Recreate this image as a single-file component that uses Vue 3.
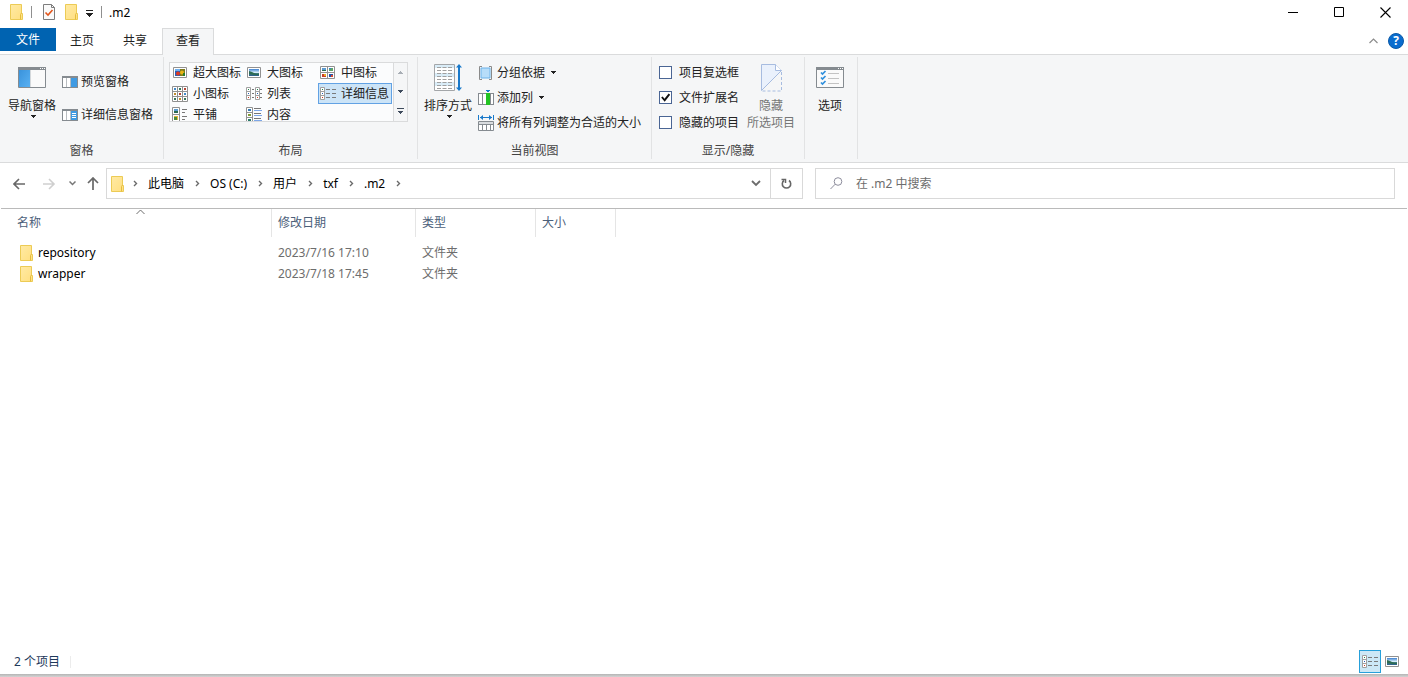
<script setup>
import { ref, reactive } from 'vue'

const tabs = ['主页', '共享', '查看']
const activeTab = ref('查看')

const layouts = [
  { name: '超大图标', icon: 'xlarge' },
  { name: '大图标', icon: 'large' },
  { name: '中图标', icon: 'medium' },
  { name: '小图标', icon: 'small' },
  { name: '列表', icon: 'list' },
  { name: '详细信息', icon: 'details' },
  { name: '平铺', icon: 'tiles' },
  { name: '内容', icon: 'content' },
]
const layout = ref('详细信息')

const toggles = reactive([
  { id: 'opt-boxes', name: '项目复选框', on: false },
  { id: 'opt-ext', name: '文件扩展名', on: true },
  { id: 'opt-hidden', name: '隐藏的项目', on: false },
])

const crumbs = ['此电脑', 'OS (C:)', '用户', 'txf', '.m2']
const files = [
  { name: 'repository', date: '2023/7/16 17:10', type: '文件夹' },
  { name: 'wrapper', date: '2023/7/18 17:45', type: '文件夹' },
]
const query = ref('')
</script>

<template>
  <svg class="sprite" aria-hidden="true">
    <defs>
      <linearGradient id="fold" x1="0" y1="0" x2="1" y2="1">
        <stop offset="0" stop-color="#ffeaa4" />
        <stop offset="1" stop-color="#ffdf80" />
      </linearGradient>
      <linearGradient id="sky" x1="0" y1="0" x2="0" y2="1">
        <stop offset="0" stop-color="#3c7fd0" />
        <stop offset="0.5" stop-color="#d6ecf8" />
        <stop offset="0.6" stop-color="#3e7c78" />
        <stop offset="1" stop-color="#2c5f8e" />
      </linearGradient>
      <linearGradient id="blue" x1="0" y1="0" x2="1" y2="1">
        <stop offset="0" stop-color="#3a93dc" />
        <stop offset="1" stop-color="#58b0f2" />
      </linearGradient>
    </defs>
    <symbol id="folder" viewBox="0 0 14 16">
      <path d="M.5.5h11v9h1v6H.5z" fill="url(#fold)" stroke="#eccb55" />
      <path d="M10.500 15.500v-5l1-1.500" fill="none" stroke="#e5bd3c" />
    </symbol>
    <symbol id="chev" viewBox="0 0 5 7">
      <path d="M1 1l2.500 2.500L1 6" fill="none" stroke="#6a6a6a" stroke-width="1.400" />
    </symbol>
    <symbol id="tri" viewBox="0 0 5 3"><path d="M0 0h5v1H4v1H3v1H2V2H1V1H0z" fill="currentColor" /></symbol>
    <symbol id="photo" viewBox="0 0 14 11">
      <path d="M.5.5h13v10H.5z" fill="#fff" stroke="#919191" />
      <path d="M2 2h10v7H2z" fill="url(#sky)" />
      <path d="M2 4l3 1 4 2h3v1H8L2 7z" fill="#2d6b52" />
    </symbol>
    <symbol id="xlarge" viewBox="0 0 16 16">
      <path d="M1.500 2.500h13v10h-13z" fill="#fff" stroke="#919191" />
      <path d="M3 4h10v7H3z" fill="#2b5fb8" />
      <path d="M3 4h5v2H3z" fill="#6eb0ef" />
      <path d="M8 4h5v7H8z" fill="#7c7a1c" />
      <circle cx="6" cy="8.500" r="2" fill="#e03a22" />
      <circle cx="10" cy="7.500" r="2" fill="#e8b414" />
      <path d="M11 8h2v3h-2z" fill="#2a7b2d" />
    </symbol>
    <symbol id="large" viewBox="0 0 16 16"><use href="#photo" x="1" y="2" width="14" height="11" /></symbol>
    <symbol id="medium" viewBox="0 0 16 16">
      <path d="M.5 1.500h14v12H.5zM7.500 1.500v12M.5 7.500h14" fill="#fff" stroke="#919191" />
      <path d="M2 3h4v3H2z" fill="#5c9bd0" /><path d="M2 5h4v1H2z" fill="#2d6b52" />
      <path d="M9 3h4v3H9z" fill="#5ca46a" /><path d="M9 3h2v1H9z" fill="#367bd0" />
      <path d="M2 9h4v3H2z" fill="#c93c2a" /><path d="M4 9h2v2H4z" fill="#e9ae23" />
      <path d="M9 9h4v3H9z" fill="#2653a8" /><path d="M11 10h2v2h-2z" fill="#d84a31" />
    </symbol>
    <symbol id="small" viewBox="0 0 16 16">
      <path d="M.5.5h15v15H.5zM5.500.5v15M10.500.5v15M.5 5.500h15M.5 10.500h15" fill="#fff" stroke="#919191" />
      <path d="M2 2h2v2H2zM12 7h2v2h-2z" fill="#4189c8" />
      <path d="M7 2h2v2H7zM2 12h2v2H2zM12 12h2v2h-2z" fill="#36765a" />
      <path d="M12 2h2v2h-2zM7 7h2v2H7z" fill="#b44434" />
      <path d="M2 7h2v2H2zM7 12h2v2H7z" fill="#be8a2c" />
    </symbol>
    <symbol id="list" viewBox="0 0 16 16">
      <path d="M.5 1.500h4v12h-4zM.5 5.500h4M.5 9.500h4M9.500 1.500h4v12h-4zM9.500 5.500h4M9.500 9.500h4" fill="#fff" stroke="#a0a0a0" />
      <path d="M6 3.500h2M6 7.500h2M6 11.500h2M14 3.500h2M14 7.500h2M14 11.500h2" stroke="#777" />
      <path d="M2 3h1v1H2zM11 3h1v1h-1z" fill="#1f854a" />
      <path d="M2 7h1v1H2zM11 7h1v1h-1z" fill="#245fb8" />
      <path d="M2 11h1v1H2zM11 11h1v1h-1z" fill="#d03a22" />
    </symbol>
    <symbol id="details" viewBox="0 0 16 16">
      <path d="M.5 1.500h4v12h-4zM.5 5.500h4M.5 9.500h4" fill="#fff" stroke="#a0a0a0" />
      <path d="M6 3.500h4M6 7.500h4M6 11.500h4M12 3.500h4M12 7.500h4M12 11.500h4" stroke="#7b7b7b" />
      <path d="M2 3h1v1H2z" fill="#1f854a" /><path d="M2 7h1v1H2z" fill="#245fb8" /><path d="M2 11h1v1H2z" fill="#d03a22" />
    </symbol>
    <symbol id="tiles" viewBox="0 0 16 16">
      <path d="M.5.5h7v14h-7zM.5 7.500h7" fill="#fff" stroke="#919191" />
      <path d="M2 2h4v4H2z" fill="#5c9bd0" /><path d="M2 4h4v2H2z" fill="#2d6b52" />
      <path d="M2 9h4v4H2z" fill="#e3b53b" /><path d="M2 10h3v3H2z" fill="#4c8b3a" />
      <path d="M10 2.500h5M10 5.500h3M10 9.500h5M10 12.500h3" stroke="#777" />
    </symbol>
    <symbol id="content" viewBox="0 0 16 16">
      <path d="M.5.5h6v15h-6zM.5 5.500h6M.5 10.500h6" fill="#fff" stroke="#919191" />
      <path d="M2 2h3v2H2z" fill="#367bb0" /><path d="M2 7h3v2H2z" fill="#7e9a35" /><path d="M2 12h3v2H2z" fill="#2a7a6a" />
      <path d="M8 1.500h7M8 6.500h7M8 11.500h7" stroke="#777" />
      <path d="M8 3.500h8M8 8.500h8M8 13.500h8" stroke="#7da7e8" />
    </symbol>
  </svg>

  <div class="window">
    <header class="titlebar">
      <svg class="folder"><use href="#folder" /></svg>
      <i class="bar first"></i>
      <button class="plain prop" aria-label="属性">
        <svg width="12" height="16" viewBox="0 0 12 16">
          <path d="M.5.5h8l3 3v12H.5z" fill="#fafafa" stroke="#7d7d7d" />
          <path d="M8.500.5v3h3" fill="none" stroke="#7d7d7d" />
          <path d="M2.500 8.500l2.500 2.500L9.500 6" fill="none" stroke="#e2561c" stroke-width="1.600" />
        </svg>
      </button>
      <button class="plain newf" aria-label="新建文件夹"><svg class="folder"><use href="#folder" /></svg></button>
      <button class="plain custom" aria-label="自定义">
        <svg width="7" height="7" viewBox="0 0 7 7" shape-rendering="crispEdges"><path d="M0 0h7v1H0zM0 3h7v1H6v1H5v1H4v1H3V6H2V5H1V4H0z" fill="#222" /></svg>
      </button>
      <i class="bar"></i>
      <h1>.m2</h1>
      <div class="controls">
        <button class="plain" aria-label="最小化"><svg width="10" height="11"><path d="M0 5.500h10" stroke="#000" /></svg></button>
        <button class="plain" aria-label="最大化"><svg width="11" height="11"><path d="M.5.5h9v9h-9z" fill="none" stroke="#000" /></svg></button>
        <button class="plain" aria-label="关闭"><svg width="11" height="11"><path d="M.5.5l10 10M10.500.5l-10 10" stroke="#000" stroke-width="1.100" /></svg></button>
      </div>
    </header>

    <nav class="tabs">
      <button class="plain file">文件</button>
      <button v-for="t in tabs" :key="t" class="plain tab" :class="{ active: t === activeTab }" @click="activeTab = t">{{ t }}</button>
      <div class="tabtools">
        <button class="plain" aria-label="最小化功能区"><svg width="9" height="6"><path d="M.5 5l4-4 4 4" fill="none" stroke="#8c8c8c" stroke-width="1.200" /></svg></button>
        <button class="help" aria-label="帮助">?</button>
      </div>
    </nav>

    <section class="ribbon">
      <div class="group">
        <div class="body panes">
          <button class="plain big">
            <span class="pic">
              <svg width="28" height="21" viewBox="0 0 28 21">
                <path d="M.5.5h27v20H.5z" fill="#fafafa" stroke="#858b90" />
                <path d="M0 0h28v3H0z" fill="#858b90" /><path d="M22 1h1v1h-1zM24 1h1v1h-1zM26 1h1v1h-1z" fill="#fff" />
                <path d="M1 3h11v17H1z" fill="url(#blue)" /><path d="M12 3h1v17h-1z" fill="#d4d8db" />
              </svg>
            </span>
            导航窗格
            <svg class="tri"><use href="#tri" /></svg>
          </button>
          <div class="col tall">
            <button class="plain line">
              <svg width="16" height="12" viewBox="0 0 16 12" shape-rendering="crispEdges">
                <path d="M.5.5h15v11H.5z" fill="#fff" stroke="#858b90" /><path d="M0 0h16v2H0z" fill="#858b90" />
                <path d="M4 2h1v9H4zM8 2h1v9H8z" fill="#b9bdc1" /><path d="M9 2h6v9H9z" fill="#3f9ae2" />
              </svg>预览窗格
            </button>
            <button class="plain line">
              <svg width="16" height="12" viewBox="0 0 16 12" shape-rendering="crispEdges">
                <path d="M.5.5h15v11H.5z" fill="#fff" stroke="#858b90" /><path d="M0 0h16v2H0z" fill="#858b90" />
                <path d="M4 2h1v9H4zM8 2h1v9H8z" fill="#b9bdc1" /><path d="M9 2h6v9H9z" fill="#3f9ae2" />
                <path d="M10 4.500h4M10 6.500h4M10 8.500h4" stroke="#fff" />
              </svg>详细信息窗格
            </button>
          </div>
        </div>
        <h2>窗格</h2>
      </div>

      <div class="group">
        <div class="body">
          <div class="gallery">
            <div class="choices">
              <button v-for="l in layouts" :key="l.name" class="plain choice" :class="{ chosen: l.name === layout }" @click="layout = l.name">
                <svg class="ico"><use :href="'#' + l.icon" /></svg>{{ l.name }}
              </button>
            </div>
            <div class="scroll">
              <button class="plain off" aria-label="向上"><svg class="tri up"><use href="#tri" /></svg></button>
              <button class="plain" aria-label="向下"><svg class="tri"><use href="#tri" /></svg></button>
              <button class="plain more" aria-label="更多"><svg width="7" height="6" viewBox="0 0 7 6" shape-rendering="crispEdges"><path d="M0 0h7v1H0zM1 3h5v1H5v1H4v1H3V5H2V4H1z" fill="#3d4a5c" /></svg></button>
            </div>
          </div>
        </div>
        <h2>布局</h2>
      </div>

      <div class="group">
        <div class="body current">
          <button class="plain big">
            <span class="pic">
              <svg width="28" height="28" viewBox="0 0 28 28">
                <path d="M.5.5h20v26H.5z" fill="#fff" stroke="#a3a6a9" />
                <path d="M1 1h19v3H1zM1 9h19v4H1zM1 18h19v4H1z" fill="#d9ecf7" />
                <path d="M3 3.500h15M3 6.500h15M3 9.500h15M3 12.500h15M3 15.500h15M3 18.500h15M3 21.500h15M3 24.500h15" stroke="#a0a0a0" stroke-dasharray="4 1.500" />
                <path d="M25 2v23" stroke="#1979ca" stroke-width="2" />
                <path d="M22 3.500L25 0l3 3.500zM22 23.500l3 3.500 3-3.500z" fill="#1979ca" />
              </svg>
            </span>
            排序方式
            <svg class="tri"><use href="#tri" /></svg>
          </button>
          <div class="col">
            <button class="plain line">
              <svg width="16" height="14" viewBox="0 0 16 14">
                <path d="M4 .5H1.500v13H4M11 .5h2.500v13H11" fill="none" stroke="#8a8a8a" />
                <path d="M3 2h9v10H3z" fill="#b7ddf9" stroke="#6db3ea" />
              </svg>分组依据<svg class="tri side"><use href="#tri" /></svg>
            </button>
            <button class="plain line">
              <svg width="16" height="16" viewBox="0 0 16 16" shape-rendering="crispEdges">
                <path d="M.5 3.500h15v11H.5zM4.500 3.500v11M12.500 3.500v11" fill="#fff" stroke="#858b90" />
                <path d="M8 3h4v12H8z" fill="#22c322" /><path d="M8 0h4v1h-1v1H9V1H8z" fill="#1979ca" />
              </svg>添加列<svg class="tri side"><use href="#tri" /></svg>
            </button>
            <button class="plain line">
              <svg width="16" height="16" viewBox="0 0 16 16">
                <path d="M.5 0v5M15.500 0v5M2 2.500h12" stroke="#1979ca" />
                <path d="M5 0L2 2.500 5 5zM11 0l3 2.500L11 5z" fill="#1979ca" />
                <path d="M.5 6.500h15v9H.5z" fill="#fff" stroke="#858b90" /><path d="M1 7h14v2H1z" fill="#d9dcdf" />
                <path d="M.5 9.500h15M4.500 10v6M8.500 10v6M12.500 10v6" stroke="#858b90" />
              </svg>将所有列调整为合适的大小
            </button>
          </div>
        </div>
        <h2>当前视图</h2>
      </div>

      <div class="group">
        <div class="body show">
          <div class="col">
            <label v-for="t in toggles" :key="t.id" class="check" :for="t.id"><input :id="t.id" v-model="t.on" type="checkbox" />{{ t.name }}</label>
          </div>
          <button class="plain big hide" disabled>
            <span class="pic">
              <svg width="21" height="28" viewBox="0 0 21 28">
                <path d="M.5 26.500V.5h14l6 6z" fill="#eaf1fc" stroke="#a7bce0" />
                <path d="M14.500.5v6h6" fill="#fff" stroke="#a7bce0" />
                <path d="M20.500 8v19H1" fill="none" stroke="#a7bce0" stroke-dasharray="3 2" />
              </svg>
            </span>
            隐藏<br />所选项目
          </button>
        </div>
        <h2>显示/隐藏</h2>
      </div>

      <div class="group">
        <div class="body options">
          <button class="plain big">
            <span class="pic">
              <svg width="28" height="21" viewBox="0 0 28 21">
                <path d="M.5.5h27v20H.5z" fill="#fafafa" stroke="#858b90" />
                <path d="M0 0h28v3H0z" fill="#858b90" /><path d="M22 1h1v1h-1zM24 1h1v1h-1zM26 1h1v1h-1z" fill="#fff" />
                <path d="M5 5.500l1.500 1.500L9.500 4M5 10.500L6.500 12l3-3M5 15.500L6.500 17l3-3" fill="none" stroke="#2f8fdc" stroke-width="1.700" />
                <path d="M12 6.500h11M12 11.500h11M12 16.500h11" stroke="#c3c3c3" />
              </svg>
            </span>
            选项
          </button>
        </div>
      </div>
    </section>

    <div class="nav">
      <div class="moves">
        <button class="plain" aria-label="后退"><svg width="13" height="12"><path d="M1 6h11M6 1L1 6l5 5" fill="none" stroke="#686868" stroke-width="1.600" /></svg></button>
        <button class="plain" aria-label="前进"><svg width="13" height="12"><path d="M0 6h11M6 1l5 5-5 5" fill="none" stroke="#cfcfcf" stroke-width="1.600" /></svg></button>
        <button class="plain recent" aria-label="最近"><svg width="7" height="5"><path d="M.5.5l3 3 3-3" fill="none" stroke="#777" stroke-width="1.500" /></svg></button>
        <button class="plain" aria-label="向上"><svg width="12" height="13"><path d="M6 13V1M1 6l5-5 5 5" fill="none" stroke="#686868" stroke-width="1.700" /></svg></button>
      </div>
      <div class="address">
        <svg class="folder"><use href="#folder" /></svg>
        <svg class="chev"><use href="#chev" /></svg>
        <template v-for="c in crumbs" :key="c">
          <button class="plain crumb">{{ c }}</button>
          <svg class="chev"><use href="#chev" /></svg>
        </template>
        <button class="plain drop" aria-label="历史"><svg width="10" height="7"><path d="M1 1l4 4 4-4" fill="none" stroke="#6c6c6c" stroke-width="1.800" /></svg></button>
        <button class="plain refresh" aria-label="刷新">
          <svg width="11" height="12" viewBox="0 0 11 12"><path d="M8 2.500A4.200 4.200 0 1 1 3 2.500" fill="none" stroke="#666" stroke-width="1.600" /><path d="M.5 1.500H4.500V5" fill="none" stroke="#666" stroke-width="1.500" /></svg>
        </button>
      </div>
      <div class="search">
        <svg width="13" height="13" viewBox="0 0 13 13"><circle cx="8" cy="4.500" r="3.800" fill="none" stroke="#8d8d9c" /><path d="M5.200 7.200L.5 12" stroke="#8d8d9c" /></svg>
        <input v-model="query" type="text" aria-label="搜索" placeholder="在 .m2 中搜索" />
      </div>
    </div>

    <main>
      <table>
        <colgroup><col class="c1" /><col class="c2" /><col class="c3" /><col class="c4" /><col /></colgroup>
        <thead>
          <tr>
            <th>名称<svg class="sort" width="9" height="6"><path d="M.5 5l4-4 4 4" fill="none" stroke="#6d6d6d" /></svg></th>
            <th>修改日期</th><th>类型</th><th>大小</th><td></td>
          </tr>
        </thead>
        <tbody>
          <tr v-for="f in files" :key="f.name">
            <td class="name"><svg class="folder"><use href="#folder" /></svg>{{ f.name }}</td>
            <td>{{ f.date }}</td><td>{{ f.type }}</td><td></td><td></td>
          </tr>
        </tbody>
      </table>
    </main>

    <footer>
      <span class="count">2 个项目</span>
      <button class="plain mode on" aria-label="详细信息"><svg class="ico"><use href="#details" /></svg></button>
      <button class="plain mode" aria-label="大图标"><svg width="14" height="11"><use href="#photo" width="14" height="11" /></svg></button>
    </footer>
    <div class="edge"></div>
  </div>
</template>

<style>
body { background: #fff; }
</style>

<style scoped>
.window {
  min-height: 100vh;
  display: flex;
  flex-direction: column;
  font: 12px/17px "Noto Sans", "Noto Sans CJK SC", sans-serif;
  color: #222;
  white-space: nowrap;
}
.window, .window * { box-sizing: border-box; }
.sprite { position: absolute; width: 0; height: 0; }
svg { display: block; flex: none; }
.plain {
  font: inherit;
  color: inherit;
  background: none;
  border: 0;
  padding: 0;
  margin: 0;
  display: flex;
  align-items: center;
}
.folder { width: 14px; height: 16px; }
.ico { width: 16px; height: 16px; }
.tri { width: 5px; height: 3px; shape-rendering: crispEdges; }

.titlebar { height: 28px; padding: 0 0 4px 10px; display: flex; align-items: center; }
.bar { width: 1px; height: 12px; background: #8f8f8f; }
.bar.first { margin-left: 7px; }
.prop { margin-left: 11px; }
.newf { margin-left: 10px; }
.custom { margin: 3px 8px 0 7px; }
h1 { margin: 0 0 0 7px; font: inherit; color: #000; }
.controls { margin-left: auto; display: flex; }
.controls button { width: 46px; height: 24px; justify-content: center; }

.tabs { height: 27px; display: flex; align-items: flex-start; box-shadow: inset 0 -1px #dadbdc; }
.file { height: 23px; padding: 0 16px; background: #0063b1; color: #fff; }
.tab { height: 27px; padding: 0 14px 2px; margin-right: 1px; }
.tab.active { padding: 0 13px 3px; background: #f5f6f7; border: solid #dadbdc; border-width: 1px 1px 0; }
.tabtools { margin-left: auto; display: flex; align-items: center; gap: 10px; padding: 5px 4px 0 0; }
.help {
  width: 16px; height: 16px; padding: 0; border: 1px solid #0a5aa8; border-radius: 50%;
  background: #0a6cce; color: #fff; font: bold 12px/14px "Open Sans", sans-serif;
}

.ribbon { display: flex; padding: 2px 0 3px; background: #f5f6f7; border-bottom: 1px solid #dadbdc; }
.group { border-right: 1px solid #e2e3e4; }
.body { height: 84px; display: flex; align-items: flex-start; }
h2 { margin: 0; padding-top: 1px; font: inherit; text-align: center; color: #444; }
.panes { padding: 0 10px 0 8px; gap: 6px; }
.current { padding: 0 10px 0 6px; gap: 6px; }
.show { padding: 0 9px 0 7px; gap: 8px; }
.options { padding: 0 13px 0 11px; }
.big { flex-direction: column; padding-top: 6px; text-align: center; }
.pic { height: 29px; margin-bottom: 5px; display: flex; align-items: center; }
.big .tri { margin: 1px 0 0 3px; }
.hide { color: #767676; }
.col { padding-top: 3px; }
.col.tall { padding-top: 8px; }
.line { height: 25px; gap: 3px; }
.tall .line { height: 33px; }
.side { margin-left: 3px; }
.check { height: 25px; display: flex; align-items: center; gap: 7px; }
.check input { appearance: none; width: 13px; height: 13px; margin: 0; border: 1px solid #4a6594; background: #fff; }
.check input:checked::after {
  content: ""; display: block; height: 11px; background: #111;
  clip-path: polygon(10% 50%, 24% 40%, 40% 62%, 78% 14%, 92% 24%, 42% 88%);
}

.gallery { height: 60px; margin: 5px 9px 0 5px; display: flex; border: 1px solid #dadbdc; background: #fbfcfd; overflow: hidden; }
.choices { display: grid; grid-template-columns: repeat(3, 74px); grid-template-rows: repeat(3, 21px); margin: -1px 1px 0 0; }
.choice { gap: 5px; padding: 0 0 0 2px; }
.chosen { padding-left: 1px; background: #cce4f7; border: 1px solid #62a2e4; }
.scroll { border-left: 1px solid #dadbdc; background: #f5f6f7; color: #3d4a5c; }
.scroll button { width: 13px; height: 19px; justify-content: center; }
.off { color: #a8aeb5; }
.up { transform: rotate(180deg); }

.nav { display: flex; align-items: center; padding: 5px 13px 9px; }
.moves { width: 93px; display: flex; align-items: center; gap: 17px; }
.moves .recent { margin: 0 -6px 0 -4px; }
.address { flex: 691 1 0; height: 31px; display: flex; align-items: center; padding-left: 4px; border: 1px solid #d9d9d9; }
.address .folder { margin-right: 8px; }
.chev { width: 5px; height: 7px; }
.crumb { color: #000; margin: 0 11px 0 10px; }
.drop { margin-left: auto; padding: 0 9px; height: 29px; }
.refresh { width: 32px; height: 29px; justify-content: center; border-left: 1px solid #d9d9d9; }
.search { flex: 550 1 0; height: 31px; margin-left: 12px; display: flex; align-items: center; padding: 0 14px; gap: 13px; border: 1px solid #d9d9d9; }
.search input { flex: 1; min-width: 0; border: 0; padding: 0; outline: 0; font: inherit; color: #222; }
.search input::placeholder { color: #6d6d6d; opacity: 1; }

main { flex: 1; margin: 0 1px; border-top: 1px solid #bababa; }
table { width: 100%; table-layout: fixed; border-collapse: separate; border-spacing: 0; }
.c1 { width: 271px; }
.c2 { width: 144px; }
.c3 { width: 120px; }
.c4 { width: 80px; }
th { position: relative; height: 28px; padding: 0 0 2px 6px; font-weight: 400; text-align: left; color: #4c607a; border-right: 1px solid #e5e5e5; }
th:first-child { padding-left: 16px; }
.sort { position: absolute; top: 0; left: 50%; }
tbody td { height: 21px; padding: 0 0 0 6px; color: #6d6d6d; }
tbody::before { content: ""; display: table-row; height: 5px; }
tbody .name { display: flex; align-items: center; gap: 4px; padding-left: 19px; color: #000; }

footer { display: flex; align-items: center; height: 24px; padding: 0 5px 1px 14px; color: #1e395b; }
.count { margin-right: auto; padding-right: 10px; line-height: 12px; border-right: 1px solid #ececec; }
.mode { width: 22px; height: 23px; justify-content: center; }
.mode.on { background: #cce8f6; border: 1px solid #26a0da; }
.edge { height: 3px; background: linear-gradient(#b4b4b4, #d4d4d4); }
</style>
